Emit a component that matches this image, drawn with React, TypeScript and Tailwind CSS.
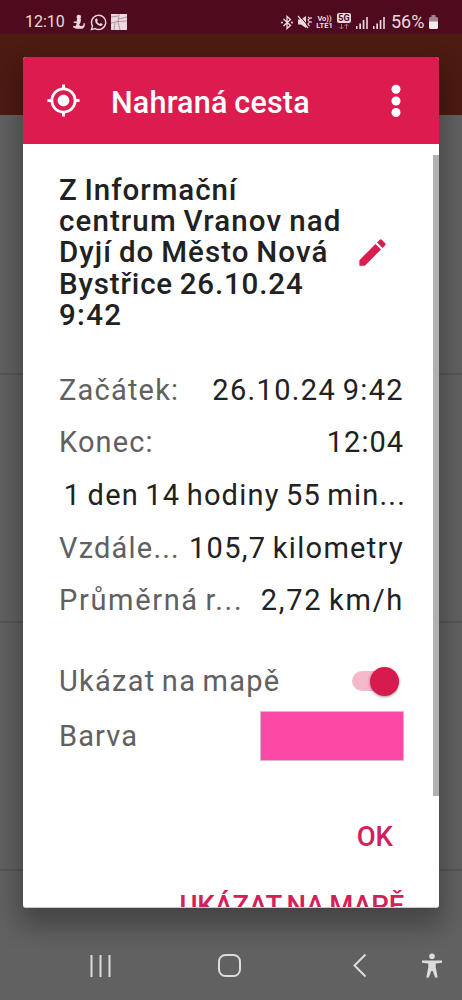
import clsx from "clsx";
import { MdGpsFixed } from "react-icons/md";

type Row = {
  label?: string;
  value: string;
  labelClass?: string;
  valueClass: string;
};

const rows: Row[] = [
  {
    label: "Začátek:",
    value: "26.10.24 9:42",
    labelClass: "tracking-[1.2px]",
    valueClass: "tracking-[1.35px]",
  },
  {
    label: "Konec:",
    value: "12:04",
    labelClass: "tracking-[1.1px]",
    valueClass: "tracking-[1px]",
  },
  { value: "1 den 14 hodiny 55 min...", valueClass: "mr-[-2px] tracking-[1.2px]" },
  {
    label: "Vzdále...",
    value: "105,7 kilometry",
    labelClass: "tracking-[1.2px]",
    valueClass: "tracking-[1.3px]",
  },
  {
    label: "Průměrná r...",
    value: "2,72 km/h",
    labelClass: "tracking-[1.65px]",
    valueClass: "tracking-[1.7px]",
  },
];

const titleLines = [
  { text: "Z Informační", className: "tracking-[0.95px]" },
  { text: "centrum Vranov nad", className: "tracking-[1.1px]" },
  { text: "Dyjí do Město Nová", className: "tracking-[1.05px]" },
  { text: "Bystřice 26.10.24", className: "tracking-[0.85px]" },
  { text: "9:42", className: "tracking-[1.3px]" },
];

export default function App() {
  return (
    <div className="relative flex h-[1000px] w-[462px] flex-col overflow-hidden bg-[#616161] font-['Roboto','Liberation_Sans',sans-serif]">
      <StatusBar />
      <div className="h-[81px] shrink-0 bg-[#4c1b12]" />
      <div className="h-[260px] shrink-0 border-b-2 border-[#565656]" />
      <div className="h-[248px] shrink-0 border-b-2 border-[#565656]" />
      <div className="h-[248px] shrink-0 border-b-2 border-[#565656]" />
      <div className="grow" />
      <NavigationBar />
      <TrackDialog />
    </div>
  );
}

function TrackDialog() {
  return (
    <div className="absolute left-[23px] top-[57px] h-[851px] w-[416px] rounded-[3px] shadow-[0_14px_26px_4px_rgba(0,0,0,0.3)]">
      <div className="flex h-full flex-col overflow-hidden rounded-[3px] border-b border-[#c8c8c8] bg-white">
        <header className="flex h-[87px] shrink-0 items-center bg-[#dc1c4f] pl-[23px] pr-[21px] text-white">
          <MdGpsFixed className="size-[35px]" />
          <h1 className="ml-[30px] mt-[5px] grow whitespace-nowrap text-[30.5px] font-medium leading-[36px] tracking-[0.2px] [word-spacing:-1px]">
            Nahraná cesta
          </h1>
          <DotsIcon />
        </header>

        <div className="flex min-h-0 grow">
          <div className="flex w-[410px] flex-col pl-[35px] pr-[29px] *:shrink-0">
            <section className="mt-[31px] flex h-[156px] items-center justify-between">
              <h2 className="pl-px text-[29.5px] font-medium leading-[31.2px] text-[#212121] [word-spacing:-1.5px]">
                {titleLines.map((line) => (
                  <div
                    key={line.text}
                    className={clsx("whitespace-nowrap", line.className)}
                  >
                    {line.text}
                  </div>
                ))}
              </h2>
              <PencilIcon />
            </section>

            <section className="mt-[33px] [word-spacing:-2px]">
              {rows.map((row) => (
                <InfoRow key={row.value} row={row} />
              ))}
            </section>

            <div className="mt-[27px] flex h-[54px] items-center justify-between text-[29px] text-[#606060]">
              <span className="whitespace-nowrap pl-px tracking-[1.25px] [word-spacing:-2px]">
                Ukázat na mapě
              </span>
              <Toggle />
            </div>
            <div className="flex h-[56px] items-center justify-between text-[29px] text-[#606060]">
              <span className="pl-px tracking-[1.1px]">Barva</span>
              <div className="h-[50px] w-[144px] border border-[#e0b4cc] bg-[#fc49a6]" />
            </div>

            <footer className="mt-[55px] flex flex-col items-end whitespace-nowrap text-[27.5px] font-medium leading-[36px] text-[#d3205a]">
              <button className="mr-[11px]">OK</button>
              <button className="mt-[33px] tracking-[-0.2px] [word-spacing:-1.5px]">
                UKÁZAT NA MAPĚ
              </button>
            </footer>
          </div>
          <div className="mt-[11px] h-[641px] w-[6px] bg-[#b0b0b0]" />
        </div>
      </div>
    </div>
  );
}

function InfoRow({ row }: { row: Row }) {
  return (
    <div className="flex h-[52.7px] items-center justify-between whitespace-nowrap text-[29px]">
      <span className={clsx("pl-px text-[#606060]", row.labelClass)}>
        {row.label}
      </span>
      <span className={clsx("text-[#212121]", row.valueClass)}>
        {row.value}
      </span>
    </div>
  );
}

function Toggle() {
  return (
    <div className="mr-[5px] flex h-[20px] w-[47px] items-center justify-end rounded-full bg-[#f4b8ca]">
      <div className="size-[29px] shrink-0 rounded-full bg-[#d81b4f] shadow-[0_1px_3px_rgba(0,0,0,0.4)]" />
    </div>
  );
}

function PencilIcon() {
  return (
    <svg
      className="mb-[2px] mr-[14px] size-[35px] shrink-0 text-[#dc1c4f]"
      viewBox="0 0 24 24"
      fill="currentColor"
    >
      <path d="M3 17.25V21h3.75L17.81 9.94l-3.75-3.75zM20.71 7.04a1 1 0 0 0 0-1.41l-2.34-2.34a1 1 0 0 0-1.41 0l-1.83 1.83 3.75 3.75z" />
    </svg>
  );
}

function DotsIcon() {
  return (
    <svg className="h-[34px] w-[44px]" viewBox="0 0 44 34" fill="currentColor">
      <circle cx="22" cy="5.3" r="4.5" />
      <circle cx="22" cy="17" r="4.5" />
      <circle cx="22" cy="28.5" r="4.5" />
    </svg>
  );
}

function StatusBar() {
  return (
    <div className="flex h-[34px] shrink-0 items-center bg-[#500a1e] pl-[25px] pr-[24px] pt-[10px] text-[#ecd9df]">
      <span className="w-[41px] whitespace-nowrap text-[16px] leading-[20px]">
        12:10
      </span>
      {/* notifications */}
      <svg className="ml-[6px] h-[16px] w-[14px]" viewBox="0 0 14 16" fill="currentColor">
        <circle cx="6.8" cy="3" r="2.3" />
        <path d="M5 5h4l-.5 3.500L7 11l2 1.200 2.200-.6.5-2.600 1.300.5-.4 3-2 2.300H4.200L1 13.200l.4-1.400 2 .4L5 9.500 1.500 8.600l.2-1.200 3 .1z" />
      </svg>
      <svg className="ml-[4px] size-[17px]" viewBox="0 0 24 24" fill="none" stroke="currentColor" strokeWidth="2">
        <path d="M2 22l1.5-5.2A10 10 0 1 1 7.2 20.5z" />
        <path d="M8.2 6.5L10 6.300l1.100 2.800-1.100 1.400c.8 1.600 2 2.800 3.600 3.500l1.300-1.400 2.900 1.400c.1 2-1.600 3-3 2.800-4.200-.6-7.300-4-7.600-7.300 0-1.300.3-2.300 1-3z" fill="currentColor" stroke="none" />
      </svg>
      <svg className="ml-[4px] size-[16px]" viewBox="0 0 16 16">
        <path d="M0 0h16v16H0z" fill="currentColor" />
        <path d="M0 9l7-1.5L16 7M8 0L7 8l2 8M0 3l7-1M8 5l8-2M3 16l1-7" fill="none" stroke="#9b7482" strokeWidth=".7" />
      </svg>
      <div className="grow" />
      <svg className="h-[15px] w-[12px]" viewBox="0 0 12 15" fill="none" stroke="currentColor" strokeWidth="1.3">
        <path d="M2.5 4l7 6.5L6 13.5v-12l3.5 3-7 6.5" />
        <circle cx="1" cy="7.5" r=".4" />
        <circle cx="11" cy="7.5" r=".4" />
      </svg>
      <svg className="ml-[4px] h-[14px] w-[15px]" viewBox="0 0 15 14">
        <path d="M1 4.500h3L9 1v12L4 9.500H1z" fill="currentColor" />
        <path d="M2 0l10 12" stroke="#500a1e" strokeWidth="1" />
        <path d="M1 1l10 12M11 2l1.500 1.500L11 5l1.500 2L11 9l1.500 2M14 2v2M14 6v2" fill="none" stroke="currentColor" strokeWidth="1.2" />
      </svg>
      <span className="ml-[4px] flex w-[17px] flex-col items-center whitespace-nowrap text-[7.5px] font-bold leading-[7px]">
        <span>Vo))</span>
        <span>LTE1</span>
      </span>
      <span className="ml-[4px] flex h-[19px] w-[14px] flex-col items-center">
        <span className="flex h-[10px] w-[14px] shrink-0 items-center justify-center rounded-[2px] bg-[#ecd9df] text-[9px] font-bold leading-[10px] text-[#500a1e]">
          5G
        </span>
        <svg className="h-[7px] w-[12px]" viewBox="0 0 12 7" fill="none" stroke="#98707f">
          <path d="M3.500 1v5M1.500 4l2 2 2-2M8.500 6V1M6.500 3l2-2 2 2" />
        </svg>
      </span>
      <SignalIcon className="ml-[5px]" />
      <SignalIcon className="ml-[5px]" />
      <span className="ml-[6px] w-[36px] whitespace-nowrap text-[18px] leading-[20px]">
        56%
      </span>
      <svg className="ml-[2px] h-[15px] w-[9px]" viewBox="0 0 9 15">
        <path d="M2.5 0h4v2H8l1 1v4H0V3l1-1h1.500z" fill="#a5818e" />
        <path d="M0 6.500h9V13l-1 1H1l-1-1z" fill="#f2e9ec" />
      </svg>
    </div>
  );
}

function SignalIcon({ className }: { className: string }) {
  return (
    <svg className={clsx("h-[13px] w-[12px]", className)} viewBox="0 0 12 13" fill="currentColor">
      <path d="M0 10h1.500v3H0zM3.300 7.500h1.700V13H3.300zM6.700 4h1.700v9H6.700zM10.200 1h1.600v12h-1.600z" />
    </svg>
  );
}

function NavigationBar() {
  return (
    <nav className="flex h-[69px] shrink-0 items-center text-[#dcdcdc]">
      <svg className="ml-[89px] h-[24px] w-[24px]" viewBox="0 0 24 24" stroke="currentColor" strokeWidth="2">
        <path d="M2.500 1v22M11.500 1v22M20.500 1v22" />
      </svg>
      <svg className="ml-[104px] size-[25px]" viewBox="0 0 25 25" fill="none" stroke="currentColor" strokeWidth="2">
        <rect x="2" y="2" width="21" height="21" rx="6.5" />
      </svg>
      <svg className="ml-[110px] h-[25px] w-[16px]" viewBox="0 0 16 25" fill="none" stroke="currentColor" strokeWidth="2">
        <path d="M13.500 1.500L2.500 12.500l11 11" />
      </svg>
      <svg className="ml-[54px] h-[25px] w-[20px]" viewBox="0 0 20 25" fill="currentColor">
        <circle cx="10" cy="3.2" r="2.8" />
        <path d="M0 7.500h20v2.200l-6.300.8v3.500l2 10.500h-2.600L10.700 18H9.300l-2.400 6.500H4.300l2-10.500v-3.500L0 9.700z" />
      </svg>
    </nav>
  );
}
